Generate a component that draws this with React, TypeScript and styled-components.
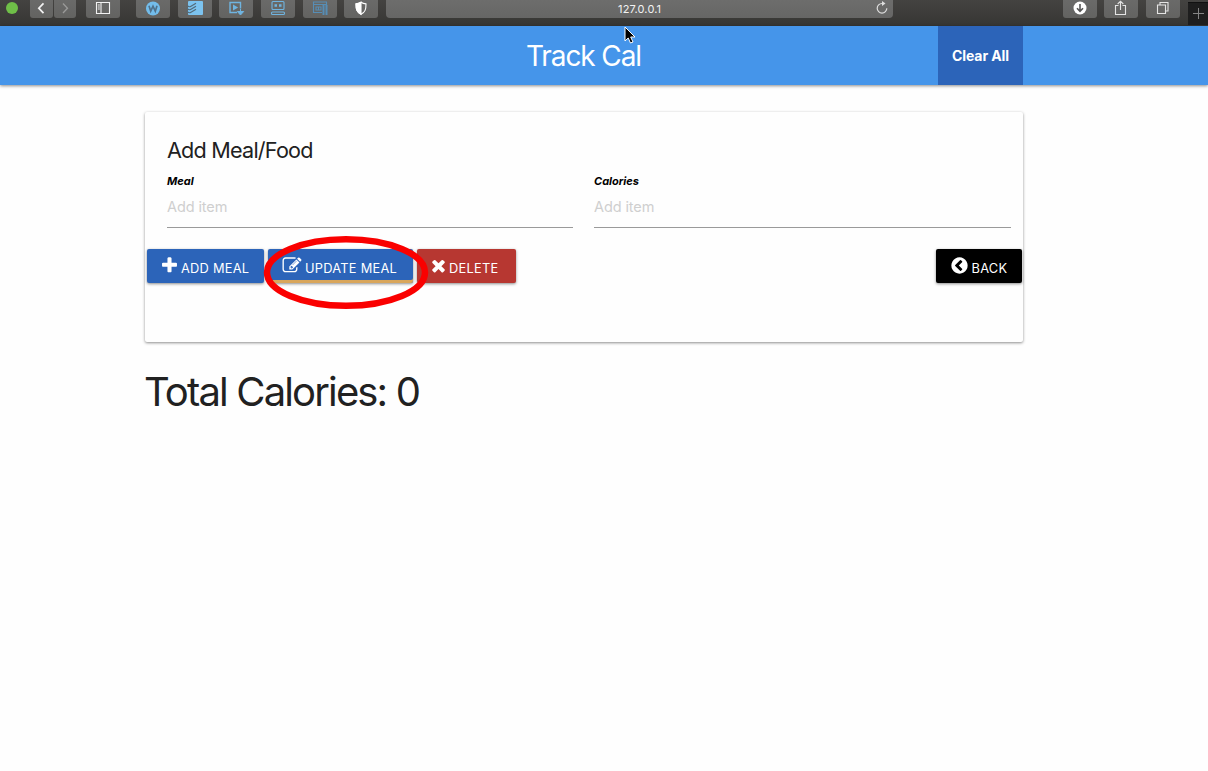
import React from "react";
import styled, { createGlobalStyle } from "styled-components";

const Global = createGlobalStyle`
  *, *::before, *::after { box-sizing: border-box; }
  body { margin: 0; background: #fefefe; font-family: Inter, "Liberation Sans", sans-serif; color: #212121; overflow: hidden; }
`;

const Page = styled.div`
  position: relative;
  width: 1208px;
  height: 771px;
  overflow: hidden;
`;

const Toolbar = styled.div`
  height: 26px;
  display: flex;
  align-items: flex-start;
  background: linear-gradient(#444341, #363633);
`;

const GreenDot = styled.span`
  width: 12px;
  height: 12px;
  flex: none;
  margin: 2px 12px 0 6px;
  border-radius: 50%;
  background: #6fbf48;
`;

const Tool = styled.span<{ $w?: number; $gap?: number }>`
  width: ${(p) => p.$w ?? 34}px;
  height: 18px;
  margin-left: ${(p) => p.$gap ?? 7.7}px;
  flex: none;
  display: flex;
  justify-content: center;
  border-radius: 0 0 3px 3px;
  background: linear-gradient(#6a6a69, #636361);
  svg { display: block; flex: none; }
`;

const Address = styled.div`
  width: 507px;
  height: 18px;
  margin-left: 7.7px;
  flex: none;
  position: relative;
  display: flex;
  justify-content: center;
  border-radius: 0 0 4px 4px;
  background: linear-gradient(#6d6d6c, #666665);
  color: #f2f2f2;
  font-size: 11px;
  line-height: 18px;
  letter-spacing: 0.15px;
`;

const Reload = styled.svg`
  position: absolute;
  right: 4px;
  top: 1px;
`;

const NewTab = styled.span`
  width: 20px;
  height: 23px;
  flex: none;
  margin: 2px 0 0 8px;
  display: flex;
  background: #1e1e1e;
  border-top: 1px solid #111;
`;

const Nav = styled.nav`
  height: 59px;
  display: flex;
  background: #4595ea;
  box-shadow: 0 1px 3px rgba(0, 0, 0, 0.45);
  padding-left: 145px;
`;

const NavInner = styled.div`
  width: 878px;
  display: grid;
  grid-template-columns: 85px 1fr 85px;
  align-items: center;
`;

const Brand = styled.h1`
  grid-column: 2;
  margin: 0;
  padding-top: 2px;
  text-align: center;
  color: #fff;
  font-weight: 400;
  font-size: 28px;
  letter-spacing: -1.1px;
  text-indent: -1px;
  line-height: 57px;
`;

const ClearAll = styled.button`
  height: 59px;
  padding: 0;
  border: 0;
  background: #2c64b9;
  color: #fff;
  font: 700 14px Inter, sans-serif;
  letter-spacing: -0.1px;
`;

const Container = styled.main`
  width: 878px;
  margin: 27px 0 0 145px;
`;

const Card = styled.section`
  height: 230px;
  padding-top: 23px;
  border-radius: 2px;
  background: #fefefe;
  box-shadow: 0 1px 3px rgba(0, 0, 0, 0.45);
`;

const CardTitle = styled.h2`
  margin: 0 22px;
  font-size: 21.6px;
  font-weight: 370;
  line-height: 30px;
  letter-spacing: -0.78px;
`;

const Fields = styled.div`
  display: grid;
  grid-template-columns: 406px 417px;
  column-gap: 21px;
  margin: 9px 0 0 22px;
`;

const Field = styled.label`
  display: flex;
  flex-direction: column;
  height: 54px;
  border-bottom: 1px solid #9a9a9a;
  color: #000;
  font-size: 11px;
  font-weight: 700;
  font-style: italic;
  line-height: 15px;
`;

const Input = styled.input`
  width: 100%;
  height: 24px;
  margin-top: 5px;
  padding: 0;
  border: 0;
  outline: 0;
  background: transparent;
  font: 400 14.5px Inter, sans-serif;
  letter-spacing: -0.1px;
  &::placeholder { color: #cfcfcf; opacity: 1; }
`;

const Actions = styled.div`
  display: flex;
  gap: 4px;
  margin-top: 21px;
  padding: 0 1.5px 0 2px;
`;

const Button = styled.button<{ $w: number; $bg: string; $underline?: boolean; $end?: boolean }>`
  width: ${(p) => p.$w}px;
  height: 34px;
  margin-left: ${(p) => (p.$end ? "auto" : "0")};
  padding: 0 0 0 14px;
  display: flex;
  align-items: center;
  gap: 3px;
  border: 0;
  border-radius: 2px;
  background: ${(p) => p.$bg};
  color: #fff;
  font: 420 12.8px Inter, sans-serif;
  letter-spacing: 0.27px;
  white-space: nowrap;
  box-shadow: ${(p) => (p.$underline ? "inset 0 -3px 0 #d9a65b, " : "")}0 1px 3px rgba(0, 0, 0, 0.45);
  svg { flex: none; margin-top: -1px; }
  span { padding-top: 4px; }
`;

const Total = styled.h3`
  margin: 26px 0 0 -1px;
  font-size: 40px;
  font-weight: 400;
  line-height: 48px;
  letter-spacing: -1.85px;
`;

const Marker = styled.svg`
  position: absolute;
  left: 260px;
  top: 232px;
`;

const Pointer = styled.svg`
  position: absolute;
  left: 622px;
  top: 25px;
`;

const glyphs = {
  plus: "M1600 736v192q0 40-28 68t-68 28h-416v416q0 40-28 68t-68 28h-192q-40 0-68-28t-28-68v-416h-416q-40 0-68-28t-28-68v-192q0-40 28-68t68-28h416v-416q0-40 28-68t68-28h192q40 0 68 28t28 68v416h416q40 0 68 28t28 68z",
  edit: "M888 1184l116-116-152-152-116 116v56h96v96h56zm440-720q-16-16-33 1l-350 350q-17 17-1 33t33-1l350-350q17-17 1-33zm80 594v190q0 119-84.5 203.5t-203.5 84.5h-832q-119 0-203.5-84.5t-84.5-203.5v-832q0-119 84.5-203.5t203.5-84.5h832q63 0 117 25 15 7 18 23 3 17-9 29l-49 49q-14 14-32 8-23-6-45-6h-832q-66 0-113 47t-47 113v832q0 66 47 113t113 47h832q66 0 113-47t47-113v-126q0-13 9-22l64-64q15-15 35-7t20 29zm-96-738l288 288-672 672h-288v-288zm444 132l-92 92-288-288 92-92q28-28 68-28t68 28l152 152q28 28 28 68t-28 68z",
  times: "M1490 1322q0 40-28 68l-136 136q-28 28-68 28t-68-28l-294-294-294 294q-28 28-68 28t-68-28l-136-136q-28-28-28-68t28-68l294-294-294-294q-28-28-28-68t28-68l136-136q28-28 68-28t68 28l294 294 294-294q28-28 68-28t68 28l136 136q28 28 28 68t-28 68l-294 294 294 294q28 28 28 68z",
  back: "M1037 1395l102-102q19-19 19-45t-19-45l-307-307 307-307q19-19 19-45t-19-45l-102-102q-19-19-45-19t-45 19l-454 454q-19 19-19 45t19 45l454 454q19 19 45 19t45-19zm627-499q0 209-103 385.5t-279.5 279.5-385.5 103-385.5-103-279.5-279.5-103-385.5 103-385.5 279.5-279.5 385.5-103 385.5 103 279.5 279.5 103 385.5z",
};

const Glyph = ({ name, box = "0 0 1792 1792", w = 19 }: { name: keyof typeof glyphs; box?: string; w?: number }) => (
  <svg width={w} height="19" viewBox={box} fill="currentColor">
    <path d={glyphs[name]} />
  </svg>
);

const Ico = ({ children, color = "#f2f2f2" }: { children: React.ReactNode; color?: string }) => (
  <svg width="18" height="18" viewBox="0 0 18 18" fill="none" stroke={color} strokeWidth="1.1">
    {children}
  </svg>
);

const blue = "#6fb4e0";

export default function App() {
  return (
    <Page>
      <Global />
      <Toolbar>
        <GreenDot />
        <Tool $w={22.5} $gap={0}>
          <Ico><path d="M11.5 3.3 6.8 8.2l4.7 5" strokeWidth="1.7" /></Ico>
        </Tool>
        <Tool $w={22.5} $gap={1}>
          <Ico color="#9a9a99"><path d="M7 3.5l4.5 4.7L7 13" strokeWidth="1.3" /></Ico>
        </Tool>
        <Tool $gap={10}>
          <Ico><path d="M2.5 2.5h13v11h-13zM7 2.5v11M3.8 5h2M3.8 7h2M3.8 9h2" /></Ico>
        </Tool>
        <Tool $gap={16}>
          <Ico color="none">
            <circle cx="9" cy="8.5" r="7" fill="#73bdeb" />
            <path d="M5 5.8l1.7 5.4L9 6.2l2.3 5L13 5.8" stroke="#50718a" strokeWidth="1.7" />
          </Ico>
        </Tool>
        <Tool>
          <Ico color="none">
            <rect x="2" y="1" width="15" height="14" rx="1" fill="#7cc3ef" />
            <path d="M1 5.5q2 2 4 .8l5-3M1 8.5q2 2 4 .8l5-3M1 11.5q2 2 4 .8l5-3" stroke="#536b7a" strokeWidth="1.2" />
          </Ico>
        </Tool>
        <Tool>
          <Ico color={blue}>
            <path d="M10 12.5H3v-10h10.5v6" strokeWidth="1.4" />
            <path d="M6 4.5v6l5.2-3z" fill={blue} stroke="none" />
            <path d="M13.5 9v3M10.3 11.5h6.4l-3.2 3.5z" fill={blue} strokeWidth="1" />
          </Ico>
        </Tool>
        <Tool>
          <Ico color={blue}>
            <rect x="3" y="1.5" width="12" height="8" rx="1" />
            <path d="M5.5 5.5h2.5M10 5.5h2.5" strokeWidth="2.5" />
            <rect x="2.5" y="12" width="13" height="2.5" rx="1" />
          </Ico>
        </Tool>
        <Tool>
          <Ico color="#568db5">
            <path d="M11 12.5H2.5V2h13v4M2.5 4.5h13M5 7h5v3H5zM7.5 7v3" />
            <path d="M12.5 5v10M15.5 5v10" strokeWidth="2" />
          </Ico>
        </Tool>
        <Tool>
          <Ico color="#fff">
            <path d="M9 2.3c1.8 1.2 3.2 1.5 5 1.6 0 5.5-.8 8.3-5 10.4C4.8 12.2 4 9.4 4 3.9c1.8-.1 3.2-.4 5-1.6z" />
            <path d="M9 2.3v12C4.8 12.2 4 9.4 4 3.9c1.8-.1 3.2-.4 5-1.6z" fill="#fff" />
          </Ico>
        </Tool>
        <Address>
          127.0.0.1
          <Reload width="14" height="15" viewBox="0 0 14 15" fill="none" stroke="#dedede" strokeWidth="1.2">
            <path d="M7 2.5a4.8 4.8 0 1 0 4.8 4.8" />
            <path d="M7 0v5l3.5-2.5z" fill="#dedede" stroke="none" />
          </Reload>
        </Address>
        <Tool $gap={169.5}>
          <Ico color="none">
            <circle cx="9" cy="8" r="6.5" fill="#fff" />
            <path d="M9 4v7M6 8.3l3 3 3-3" stroke="#555" strokeWidth="1.6" />
          </Ico>
        </Tool>
        <Tool>
          <Ico color="#e4e4e4"><path d="M6.5 5.5h-3v9h10v-9h-3M8.5 10V1.5M5.700 4l2.800-2.800L11.300 4" /></Ico>
        </Tool>
        <Tool>
          <Ico color="#e4e4e4"><path d="M3.500 5h8v8.500h-8zM6 5V2.500h8V11h-2.500" /></Ico>
        </Tool>
        <NewTab>
          <svg width="19" height="22" viewBox="0 0 19 22" stroke="#858585"><path d="M5 10.500h11M10.500 5v11" /></svg>
        </NewTab>
      </Toolbar>
      <Nav>
        <NavInner>
          <Brand>Track Cal</Brand>
          <ClearAll>Clear All</ClearAll>
        </NavInner>
      </Nav>
      <Container>
        <Card>
          <CardTitle>Add Meal/Food</CardTitle>
          <Fields>
            <Field>Meal<Input placeholder="Add item" /></Field>
            <Field>Calories<Input placeholder="Add item" /></Field>
          </Fields>
          <Actions>
            <Button $w={117} $bg="#2c64b9"><Glyph name="plus" w={17} box="96 0 1600 1792" /><span>ADD MEAL</span></Button>
            <Button $w={145} $bg="#2c64b9" $underline><Glyph name="edit" w={20} /><span>UPDATE MEAL</span></Button>
            <Button $w={99} $bg="#b73731"><Glyph name="times" box="192 0 1408 1792" w={15} /><span>DELETE</span></Button>
            <Button $w={86} $bg="#000" $end><Glyph name="back" /><span>BACK</span></Button>
          </Actions>
        </Card>
        <Total>Total Calories: 0</Total>
      </Container>
      <Marker width="172" height="82" fill="none" stroke="#fa0000" strokeWidth="6.5">
        <ellipse cx="86" cy="40.5" rx="79" ry="33.3" />
      </Marker>
      <Pointer width="16" height="22" viewBox="0 0 16 22">
        <path d="M3 2v14l3.200-3 2.300 5 2.500-1-2.300-5H13z" fill="#000" stroke="#fff" strokeWidth="1" />
      </Pointer>
    </Page>
  );
}
